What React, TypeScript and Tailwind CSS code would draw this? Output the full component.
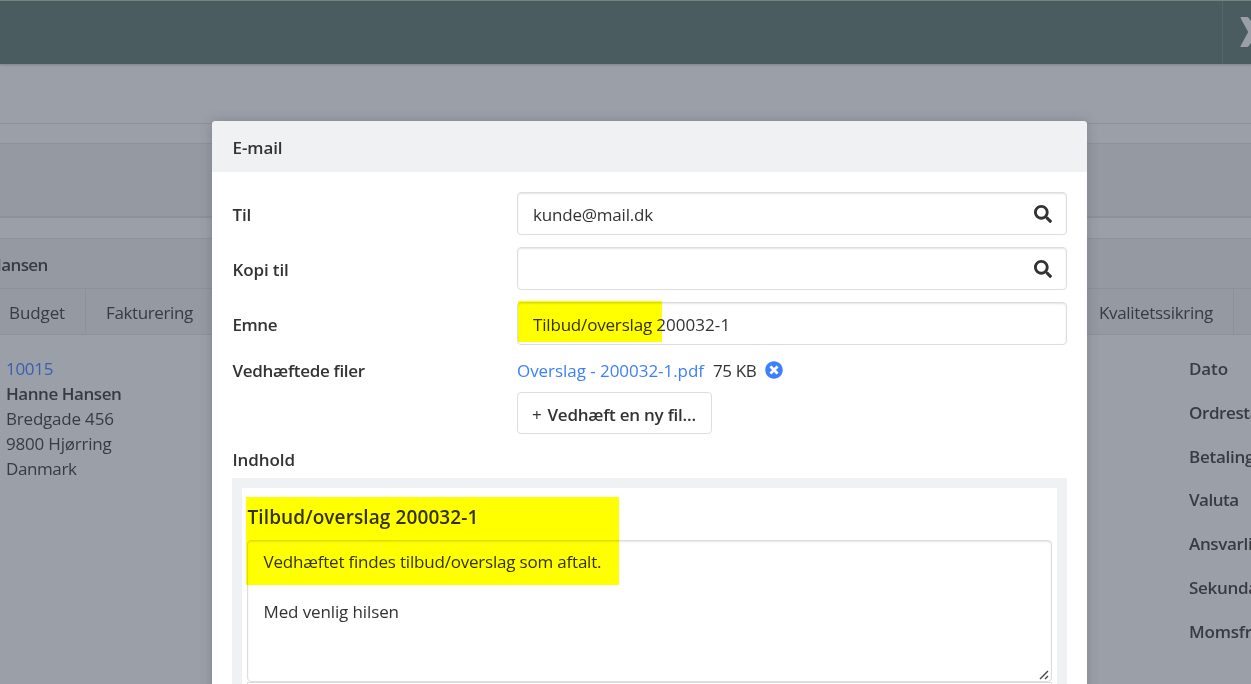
import React from "react";
import { FaSearch, FaTimesCircle } from "react-icons/fa";

const address = [
  { text: "Bredgade 456", className: "tracking-[-0.2px]" },
  { text: "9800 Hjørring", className: "tracking-[-0.2px]" },
  { text: "Danmark", className: "tracking-[-0.4px]" },
];

const orderFields = [
  { text: "Dato", className: "tracking-[-0.1px]" },
  { text: "Ordrestatus", className: "tracking-[-0.4px]" },
  { text: "Betalingsbetingelser", className: "tracking-[-0.25px]" },
  { text: "Valuta", className: "tracking-[-0.5px]" },
  { text: "Ansvarlig", className: "tracking-[-0.35px]" },
  { text: "Sekundær", className: "tracking-[-0.3px]" },
  { text: "Momsfri", className: "tracking-[-0.2px]" },
];

const Header = () => (
  <header className="flex h-16 justify-end border-t border-[#74867f] bg-[#4a5c60] shadow-[0_1px_2px_rgba(40,50,60,0.25)]">
    <div className="flex w-[29px] items-center overflow-hidden border-l border-[#56676c] pb-[1px] pl-[17px]">
      <svg width="30" height="30" viewBox="0 0 30 30" className="shrink-0" fill="#9b9fa8">
        <path d="M1.3 0H7.2Q8.2 0 8.8 1L15 10.5 21.2 1Q21.8 0 22.8 0H29L19.5 15 29 30H22.8Q21.8 30 21.2 29L15 19.5 8.8 29Q8.2 30 7.2 30H1.3Q0 30 .7 28.8L8.2 15 .7 1.2Q0 0 1.3 0Z" />
      </svg>
    </div>
  </header>
);

const OrderPage = () => (
  <div className="h-[684px] bg-[#9b9fa8] text-[#383b42]">
    <Header />
    <div className="h-[60px] border-b border-[#8d9199]" />
    <div className="mt-[19px] h-[75px] border-t border-b-2 border-t-[#8d9199] border-b-[#8d9199] bg-[#9599a1]" />
    <div className="mt-5 flex h-[51px] items-center border-y border-[#8d9199] bg-[#9599a1]">
      <span className="-ml-[11px] pt-[2px] font-semibold tracking-[-0.6px]">Hansen</span>
    </div>
    <nav className="flex h-[46px] items-center border-b border-[#8d9199] bg-[#9599a1]">
      <div className="flex h-full w-[86px] items-center border-r border-[#8d9199] pl-[9px]">
        <span className="pt-[2px] tracking-[-0.1px]">Budget</span>
      </div>
      <div className="flex h-full w-[1148px] items-center justify-between border-r border-[#8d9199] pr-5 pl-5">
        <span className="pt-[2px] tracking-[-0.38px]">Fakturering</span>
        <span className="pt-[2px] tracking-[-0.3px]">Kvalitetssikring</span>
      </div>
    </nav>
    <div className="flex justify-between pt-[21px]">
      <div className="pl-[6px] leading-[25px]">
        <p className="tracking-[-0.3px] text-[#3b5fae]">10015</p>
        <p className="font-semibold tracking-[-0.45px]">Hanne Hansen</p>
        {address.map((line) => (
          <p key={line.text} className={line.className}>
            {line.text}
          </p>
        ))}
      </div>
      <div className="flex w-[62px] flex-col gap-[18.8px] overflow-hidden font-semibold leading-[25px] whitespace-nowrap">
        {orderFields.map((field) => (
          <p key={field.text} className={field.className}>
            {field.text}
          </p>
        ))}
      </div>
    </div>
  </div>
);

const inputClass =
  "flex h-[43px] w-[550px] items-center rounded-[4px] border border-[#dddddf] pl-[15px] pr-[14px] shadow-[inset_0_1px_2px_rgba(0,0,0,0.1)]";

const EmailModal = () => (
  <div className="absolute top-[121px] left-[212px] h-[563px] w-[875px] overflow-hidden rounded-t-[4px] bg-white text-[#333]">
    <div className="flex h-[51px] items-center bg-[#f0f1f3] pt-[2px] pl-[20.5px] font-semibold tracking-[-0.1px]">E-mail</div>
    <div className="px-5 pt-5">
      <div className="flex flex-col gap-3">
        <div className="flex items-center">
          <label className="w-[285px] pt-[2px] pl-[0.5px] font-semibold tracking-[-0.19px]">Til</label>
          <div className={inputClass}>
            <span className="pt-[2px] tracking-[-0.2px]">kunde@mail.dk</span>
            <FaSearch className="ml-auto h-[18px] w-[18px]" />
          </div>
        </div>
        <div className="flex items-center">
          <label className="w-[285px] pt-[2px] pl-[0.5px] font-semibold tracking-[-0.12px]">Kopi til</label>
          <div className={inputClass}>
            <FaSearch className="ml-auto h-[18px] w-[18px]" />
          </div>
        </div>
        <div className="flex items-center">
          <label className="w-[285px] pt-[2px] pl-[0.5px] font-semibold tracking-[-0.45px]">Emne</label>
          <div className={inputClass}>
            <span className="pt-[2px]">
              <span className="tracking-[-0.18px]">Tilbud/overslag </span>
              <span className="tracking-[0.05px]">200032-1</span>
            </span>
          </div>
        </div>
      </div>

      <div className="flex pt-[11px]">
        <div className="w-[285px] pt-[2px] pl-[0.5px] leading-[25px] font-semibold tracking-[-0.3px]">Vedhæftede filer</div>
        <div>
          <div className="flex h-[26px] items-center">
            <a className="pt-[2px] tracking-[-0.05px] text-[#3d7ffc]">Overslag - 200032-1.pdf</a>
            <span className="ml-[9px] pt-[2px] tracking-[-0.35px]">75 KB</span>
            <FaTimesCircle className="mt-[2px] ml-[9px] h-[18px] w-[18px] text-[#3d7ffc]" />
          </div>
          <button className="mt-[10px] flex h-[42px] w-[195px] items-center rounded-[4px] border border-[#dddddf] pt-[2px] pl-[14px]">
            <span className="w-[15.5px] text-left text-[17px]">+</span>
            <span className="font-semibold tracking-[-0.24px]">Vedhæft en ny fil...</span>
          </button>
        </div>
      </div>

      <div className="mt-3 h-8 pl-[0.5px] leading-[28px] font-semibold tracking-[-0.1px]">Indhold</div>
      <div className="h-[220px] border-10 border-b-0 border-[#f0f1f3] px-[5px]">
        <h3 className="h-[52px] pt-[1px] pl-[0.5px] text-[19px] leading-[56px] font-semibold tracking-[0.1px]">Tilbud/overslag 200032-1</h3>
        <div className="relative h-[142px] rounded-[4px] border border-[#dddddf] pr-[15px] pl-[15.5px] pt-2 leading-[25px] shadow-[inset_0_1px_2px_rgba(0,0,0,0.1)]">
          <p className="tracking-[-0.2px]">Vedhæftet findes tilbud/overslag som aftalt.</p>
          <p className="mt-[25px] tracking-[-0.12px]">Med venlig hilsen</p>
          <svg className="absolute right-[2px] bottom-[1px]" width="10" height="10" stroke="#444" strokeWidth="1.4">
            <path d="M1 9 9 1M6 9 9 6" />
          </svg>
        </div>
        <div className="h-5 border-x border-t border-[#dddddf]" />
      </div>
    </div>

    {/* marker strokes over the subject and the message intro */}
    <div className="absolute top-[180px] left-[306px] h-[40.5px] w-[144px] bg-[#ff0] mix-blend-multiply" />
    <div className="absolute top-[376px] left-[34px] h-[88px] w-[373px] bg-[#ff0] mix-blend-multiply" />
  </div>
);

export default function App() {
  return (
    <div className="relative h-[684px] w-[1251px] overflow-hidden font-['Open_Sans','Noto_Sans',sans-serif] text-[17px] leading-[25px]">
      <OrderPage />
      <div className="absolute top-[121px] left-[212px] h-[600px] w-[875px] rounded-[4px] shadow-[0_0_12px_rgba(50,55,70,0.25)]" />
      <EmailModal />
    </div>
  );
}
